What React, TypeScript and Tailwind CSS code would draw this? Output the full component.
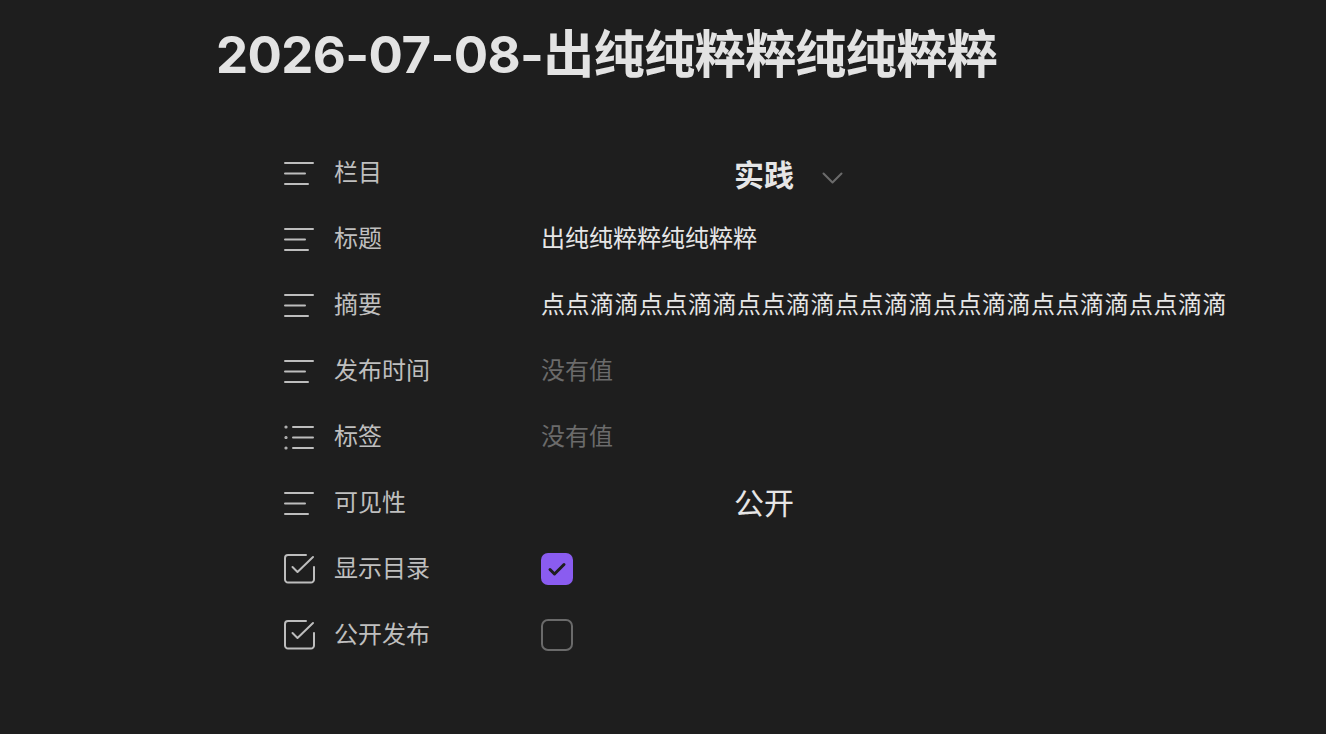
import type { ReactNode } from "react";

const font = { fontFamily: '"Inter", "Noto Sans CJK SC", sans-serif' };

const LinesIcon = () => (
  <svg width="32" height="32" viewBox="0 0 32 32" fill="none" stroke="#bdbdbd" strokeWidth="2" strokeLinecap="round">
    <path d="M1 6h28" />
    <path d="M1 16.5h20" />
    <path d="M1 27h23" />
  </svg>
);

const ListIcon = () => (
  <svg width="32" height="32" viewBox="0 0 32 32" fill="none" stroke="#bdbdbd" strokeWidth="2" strokeLinecap="round">
    <path d="M9 6h20" />
    <path d="M9 16.5h20" />
    <path d="M9 27h20" />
    <circle cx="2" cy="6" r="0.6" fill="#bdbdbd" />
    <circle cx="2" cy="16.5" r="0.6" fill="#bdbdbd" />
    <circle cx="2" cy="27" r="0.6" fill="#bdbdbd" />
  </svg>
);

const CheckSquareIcon = () => (
  <svg width="34" height="32" viewBox="0 0 34 32" fill="none" stroke="#bdbdbd" strokeWidth="2" strokeLinecap="round" strokeLinejoin="round">
    <path d="M30 14v12.5a3 3 0 0 1-3 3H4a3 3 0 0 1-3-3V5a3 3 0 0 1 3-3h18" />
    <path d="M8.5 14l5 5L29 4" />
  </svg>
);

const Chevron = () => (
  <svg width="21" height="12" viewBox="0 0 21 12" fill="none" stroke="#6b6b6b" strokeWidth="2" strokeLinecap="round" strokeLinejoin="round">
    <path d="M1.5 1.5l9 9 9-9" />
  </svg>
);

const Checkbox = ({ checked }: { checked: boolean }) =>
  checked ? (
    <div className="flex h-[32px] w-[32px] items-center justify-center rounded-[7px] bg-[#8a5cf0]">
      <svg width="20" height="16" viewBox="0 0 20 16" fill="none" stroke="#1e1e1e" strokeWidth="3" strokeLinecap="round" strokeLinejoin="round">
        <path d="M3 8.5l4.5 4.5L17 3.5" />
      </svg>
    </div>
  ) : (
    <div className="h-[32px] w-[32px] rounded-[7px] border-2 border-[#6a6a6a]" />
  );

const Row = ({ icon, label, children }: { icon: ReactNode; label: string; children: ReactNode }) => (
  <div className="flex h-[66px] items-center">
    <div className="flex w-[50px] items-center">{icon}</div>
    <div className="w-[207px] text-[24px] leading-[32px] text-[#bfbfbf]">{label}</div>
    <div className="flex items-center">{children}</div>
  </div>
);

const App = () => {
  return (
    <main className="min-h-screen bg-[#1e1e1e]" style={font}>
      <h1 className="pl-[216px] pt-[23px] text-[51px] font-bold leading-[64px] tracking-[-0.6px] text-[#e3e3e3]">
        2026-07-08-出纯纯粹粹纯纯粹粹
      </h1>
      <section className="mt-[53px] flex flex-col pl-[284px]">
        <Row icon={<LinesIcon />} label="栏目">
          <span className="ml-[193px] mt-[4px] text-[30px] font-bold leading-[40px] text-[#e6e6e6]">实践</span>
          <span className="ml-[28px] mt-[10px]">
            <Chevron />
          </span>
        </Row>
        <Row icon={<LinesIcon />} label="标题">
          <span className="text-[24px] leading-[32px] text-[#e6e6e6]">出纯纯粹粹纯纯粹粹</span>
        </Row>
        <Row icon={<LinesIcon />} label="摘要">
          <span className="text-[24px] leading-[32px] tracking-[0.5px] text-[#e6e6e6]">
            点点滴滴点点滴滴点点滴滴点点滴滴点点滴滴点点滴滴点点滴滴
          </span>
        </Row>
        <Row icon={<LinesIcon />} label="发布时间">
          <span className="text-[24px] leading-[32px] text-[#6b6b6b]">没有值</span>
        </Row>
        <Row icon={<ListIcon />} label="标签">
          <span className="text-[24px] leading-[32px] text-[#6b6b6b]">没有值</span>
        </Row>
        <Row icon={<LinesIcon />} label="可见性">
          <span className="ml-[193px] text-[30px] leading-[40px] text-[#e6e6e6]">公开</span>
        </Row>
        <Row icon={<CheckSquareIcon />} label="显示目录">
          <Checkbox checked />
        </Row>
        <Row icon={<CheckSquareIcon />} label="公开发布">
          <Checkbox checked={false} />
        </Row>
      </section>
    </main>
  );
};

export default App;
